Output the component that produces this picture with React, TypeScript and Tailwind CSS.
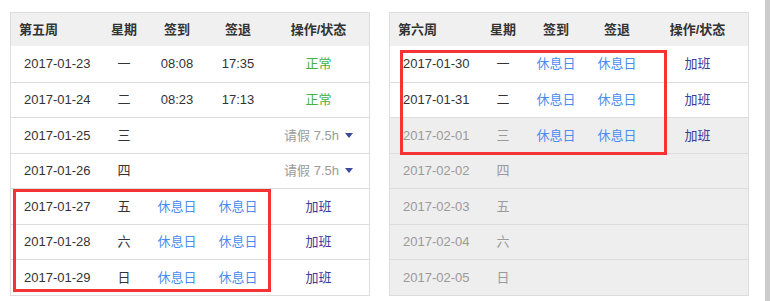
type Row = {
  date: string;
  day: string;
  inTime?: string;
  outTime?: string;
  status?: "normal" | "leave" | "overtime";
  off?: boolean;
  disabled?: boolean;
};

const week5: Row[] = [
  { date: "2017-01-23", day: "一", inTime: "08:08", outTime: "17:35", status: "normal" },
  { date: "2017-01-24", day: "二", inTime: "08:23", outTime: "17:13", status: "normal" },
  { date: "2017-01-25", day: "三", status: "leave" },
  { date: "2017-01-26", day: "四", status: "leave" },
  { date: "2017-01-27", day: "五", off: true, status: "overtime" },
  { date: "2017-01-28", day: "六", off: true, status: "overtime" },
  { date: "2017-01-29", day: "日", off: true, status: "overtime" },
];

const week6: Row[] = [
  { date: "2017-01-30", day: "一", off: true, status: "overtime" },
  { date: "2017-01-31", day: "二", off: true, status: "overtime" },
  { date: "2017-02-01", day: "三", off: true, status: "overtime", disabled: true },
  { date: "2017-02-02", day: "四", disabled: true },
  { date: "2017-02-03", day: "五", disabled: true },
  { date: "2017-02-04", day: "六", disabled: true },
  { date: "2017-02-05", day: "日", disabled: true },
];

const cols = "grid grid-cols-[91px_44px_62px_60px_1fr]";

function Status({ status }: { status?: Row["status"] }) {
  if (status === "normal") return <span className="text-[#42b142]">正常</span>;
  if (status === "overtime") return <span className="text-[#3a3a9a]">加班</span>;
  if (status === "leave")
    return (
      <span className="flex items-center gap-[6px] text-[#9a9a9a]">
        请假 7.5h
        <svg width="8" height="5" viewBox="0 0 8 5">
          <path d="M0 0h8L4 5z" fill="#3b4aa0" />
        </svg>
      </span>
    );
  return null;
}

function WeekTable({ title, rows }: { title: string; rows: Row[] }) {
  return (
    <div className="w-[360px] border border-[#dddddd] bg-white">
      <div className={`${cols} h-[33px] items-center bg-[#f0f0f0] font-bold text-[#333]`}>
        <div className="pl-[8px]">{title}</div>
        <div className="text-center">星期</div>
        <div className="text-center">签到</div>
        <div className="text-center">签退</div>
        <div className="text-center">操作/状态</div>
      </div>
      {rows.map((r, i) => (
        <div
          key={r.date}
          className={`${cols} h-[35.5px] items-center ${i > 0 ? "border-t border-[#dddddd]" : ""} ${
            r.disabled ? "bg-[#eeeeee] text-[#9a9a9a]" : "text-[#333]"
          }`}
        >
          <div className="pl-[13px]">{r.date}</div>
          <div className="text-center">{r.day}</div>
          <div className="text-center">
            {r.off ? <span className="text-[#4a8cf0]">休息日</span> : r.inTime}
          </div>
          <div className="text-center">
            {r.off ? <span className="text-[#4a8cf0]">休息日</span> : r.outTime}
          </div>
          <div className="flex justify-center">
            <Status status={r.status} />
          </div>
        </div>
      ))}
    </div>
  );
}

export default function App() {
  return (
    <div className="relative h-[301px] w-[770px] bg-white font-['Liberation_Sans','Noto_Sans_CJK_SC',sans-serif] text-[13px]">
      <div className="flex gap-[19px] pl-[10px] pt-[12px]">
        <WeekTable title="第五周" rows={week5} />
        <WeekTable title="第六周" rows={week6} />
      </div>

      {/* scrollbar strip */}
      <div className="absolute right-0 top-0 h-full w-[5px] bg-[#cccccc]" />

      {/* red annotation boxes */}
      <div className="absolute left-[13px] top-[189px] h-[103px] w-[258px] border-[3px] border-[#f53333]" />
      <div className="absolute left-[400px] top-[50px] h-[105px] w-[267px] border-[3px] border-[#f53333]" />
    </div>
  );
}
